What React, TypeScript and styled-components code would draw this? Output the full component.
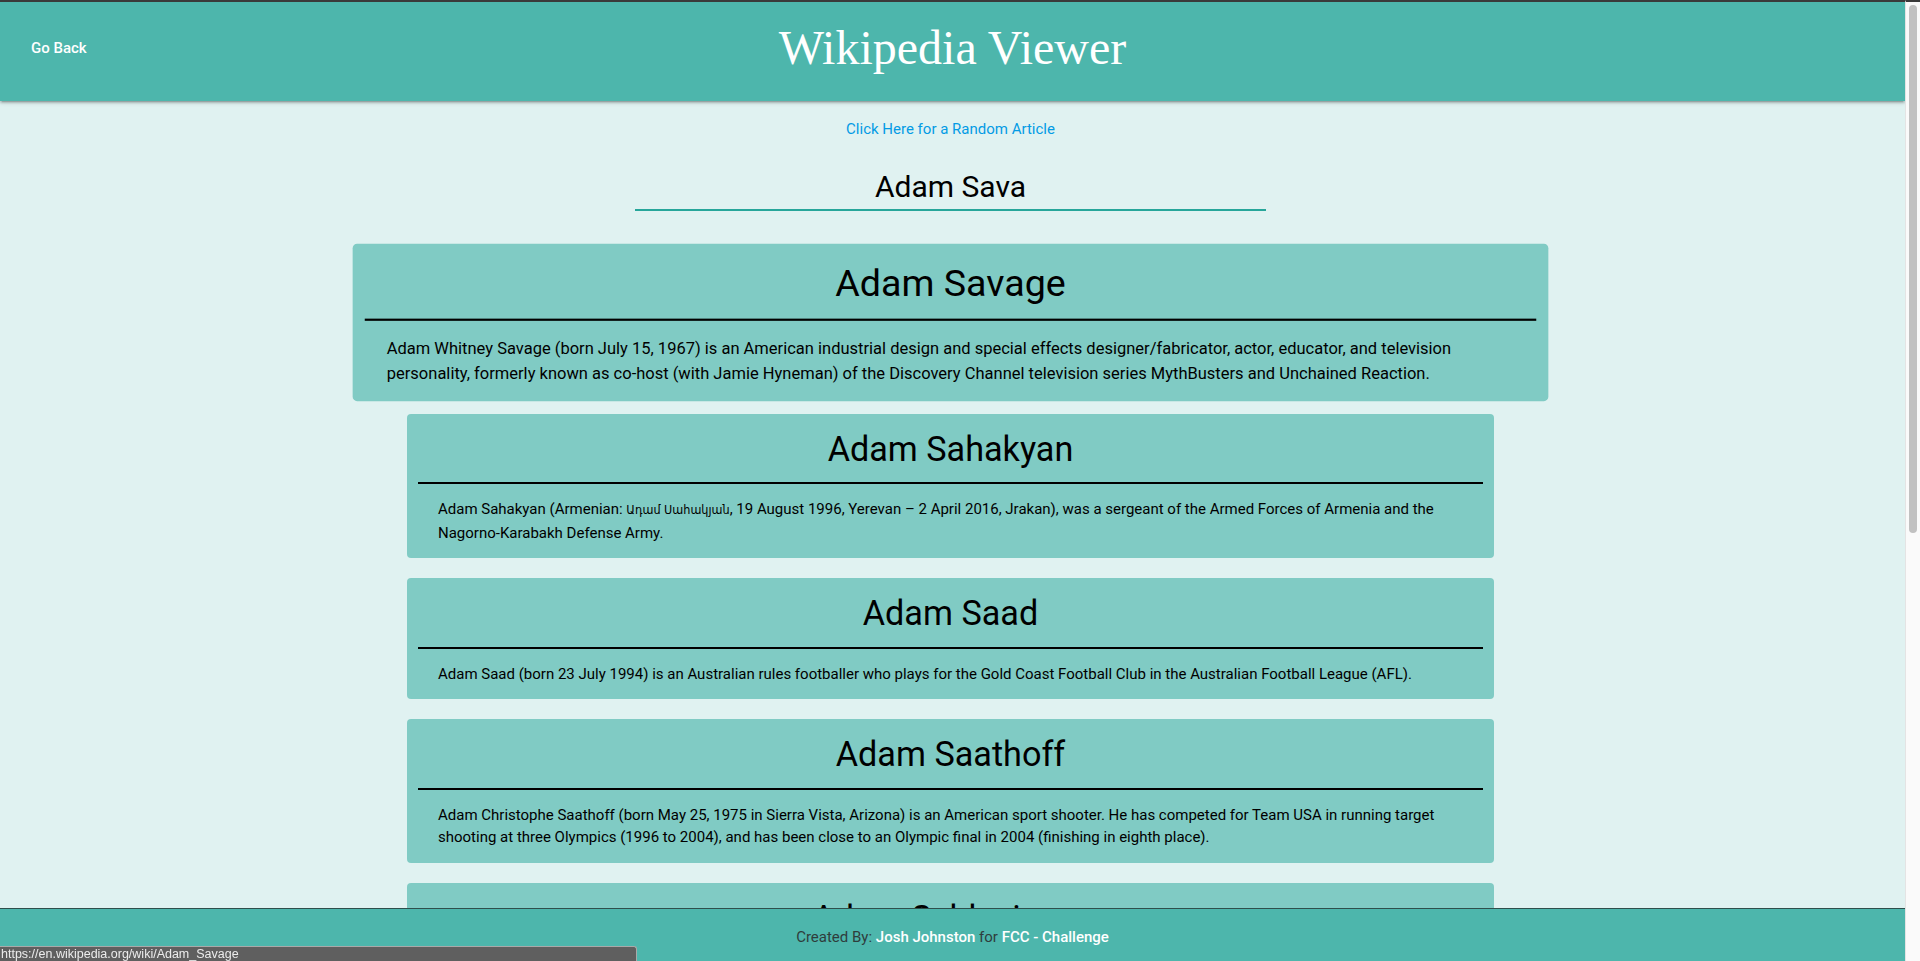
import { useState, type ReactNode } from 'react';
import styled, { createGlobalStyle } from 'styled-components';

const GlobalStyle = createGlobalStyle`
  body {
    margin: 0;
    background: #e0f2f1;
    font-family: Roboto, 'DejaVu Sans', sans-serif;
    color: #000;
  }
  * {
    box-sizing: border-box;
  }
`;

// Armenian glyphs come from a fallback font, kept a touch smaller so the line wraps like the original
const Armenian = styled.span`
  font-family: 'DejaVu Sans Condensed', 'DejaVu Sans', sans-serif;
  font-size: 12.5px;
`;

type Article = {
  title: string;
  extract: ReactNode;
  url: string;
};

const articles: Article[] = [
  {
    title: 'Adam Savage',
    extract:
      'Adam Whitney Savage (born July 15, 1967) is an American industrial design and special effects designer/fabricator, actor, educator, and television personality, formerly known as co-host (with Jamie Hyneman) of the Discovery Channel television series MythBusters and Unchained Reaction.',
    url: 'https://en.wikipedia.org/wiki/Adam_Savage',
  },
  {
    title: 'Adam Sahakyan',
    extract: (
      <>
        Adam Sahakyan (Armenian: <Armenian lang="hy">Ադամ Սահակյան</Armenian>, 19 August 1996, Yerevan – 2
        April 2016, Jrakan), was a sergeant of the Armed Forces of Armenia and the Nagorno-Karabakh Defense
        Army.
      </>
    ),
    url: 'https://en.wikipedia.org/wiki/Adam_Sahakyan',
  },
  {
    title: 'Adam Saad',
    extract:
      'Adam Saad (born 23 July 1994) is an Australian rules footballer who plays for the Gold Coast Football Club in the Australian Football League (AFL).',
    url: 'https://en.wikipedia.org/wiki/Adam_Saad',
  },
  {
    title: 'Adam Saathoff',
    extract:
      'Adam Christophe Saathoff (born May 25, 1975 in Sierra Vista, Arizona) is an American sport shooter. He has competed for Team USA in running target shooting at three Olympics (1996 to 2004), and has been close to an Olympic final in 2004 (finishing in eighth place).',
    url: 'https://en.wikipedia.org/wiki/Adam_Saathoff',
  },
  {
    title: 'Adam Schlesinger',
    extract:
      'Adam Lyons Schlesinger (October 31, 1967 – April 1, 2020) was an American musician, songwriter and record producer.',
    url: 'https://en.wikipedia.org/wiki/Adam_Schlesinger',
  },
  {
    title: 'Adam Sandler',
    extract:
      'Adam Richard Sandler (born September 9, 1966) is an American actor, comedian, screenwriter, film producer, and musician.',
    url: 'https://en.wikipedia.org/wiki/Adam_Sandler',
  },
  {
    title: 'Adam Schiff',
    extract: 'Adam Bennett Schiff (born June 22, 1960) is an American politician and lawyer.',
    url: 'https://en.wikipedia.org/wiki/Adam_Schiff',
  },
  {
    title: 'Adam Scott (actor)',
    extract: 'Adam Paul Scott (born April 3, 1973) is an American actor and comedian.',
    url: 'https://en.wikipedia.org/wiki/Adam_Scott_(actor)',
  },
  {
    title: 'Adam Scott (golfer)',
    extract: 'Adam Derek Scott (born 16 July 1980) is an Australian professional golfer.',
    url: 'https://en.wikipedia.org/wiki/Adam_Scott_(golfer)',
  },
  {
    title: 'Adam Schefter',
    extract: 'Adam Schefter (born December 7, 1966) is an American sports reporter for ESPN.',
    url: 'https://en.wikipedia.org/wiki/Adam_Schefter',
  },
];

export default function App() {
  const [query, setQuery] = useState('Adam Sava');
  const hovered = articles[0].url;

  return (
    <Page>
      <GlobalStyle />
      <HeaderBar>
        <BackLink href="#">Go Back</BackLink>
        <Title>Wikipedia Viewer</Title>
        <span />
      </HeaderBar>

      <Main>
        <RandomLink href="#">Click Here for a Random Article</RandomLink>
        <SearchInput value={query} onChange={(e) => setQuery(e.target.value)} />

        <ResultList>
          {articles.map((article) => (
            <ResultCard key={article.title} href={article.url} $lifted={article.url === hovered}>
              <CardTitle>{article.title}</CardTitle>
              <Rule />
              <Extract>{article.extract}</Extract>
            </ResultCard>
          ))}
        </ResultList>
      </Main>

      <FooterBar>
        <FooterText>
          Created By: <Highlight>Josh Johnston</Highlight> for <Highlight>FCC - Challenge</Highlight>
        </FooterText>
      </FooterBar>

      <StatusBubble>{hovered}</StatusBubble>

      <ScrollRail>
        <ScrollThumb />
      </ScrollRail>
    </Page>
  );
}

const Page = styled.div`
  padding-right: 15px;
`;

const HeaderBar = styled.header`
  display: grid;
  grid-template-columns: 1fr auto 1fr;
  align-items: center;
  height: 101px;
  padding: 0 31px 8px;
  background: #4db6ac;
  border-top: 2px solid #3a3a3a;
  box-shadow: 0 2px 2px 0 rgba(0, 0, 0, 0.14), 0 3px 1px -2px rgba(0, 0, 0, 0.12),
    0 1px 5px 0 rgba(0, 0, 0, 0.2);
  position: relative;
  z-index: 1;
`;

const BackLink = styled.a`
  justify-self: start;
  color: #fff;
  font-size: 15px;
  font-weight: 500;
  text-decoration: none;
`;

const Title = styled.h1`
  margin: 0;
  color: #fff;
  font-family: 'Liberation Serif', serif;
  font-size: 48px;
  font-weight: 400;
  line-height: 55px;
`;

const Main = styled.main`
  display: flex;
  flex-direction: column;
  align-items: center;
  padding: 17px 4px 80px 0;
`;

const RandomLink = styled.a`
  color: #039be5;
  font-size: 15px;
  line-height: 22.5px;
  text-decoration: none;
`;

const SearchInput = styled.input`
  width: 631px;
  height: 47px;
  margin: 23px 0 0;
  padding: 0;
  border: none;
  border-bottom: 2px solid #26a69a;
  background: transparent;
  outline: none;
  color: #000;
  font-family: Roboto, sans-serif;
  font-size: 30px;
  text-align: center;
`;

const ResultList = styled.div`
  display: flex;
  flex-direction: column;
  gap: 20px;
  width: 1087px;
  margin-top: 40px;
`;

const ResultCard = styled.a<{ $lifted?: boolean }>`
  display: block;
  padding: 0 11px;
  border-radius: 4px;
  background: #80cbc4;
  color: #000;
  text-decoration: none;
  transform: ${({ $lifted }) => ($lifted ? 'scale(1.1)' : 'none')};
`;

const CardTitle = styled.h4`
  margin: 17.1px 0 13.7px;
  font-size: 34.2px;
  font-weight: 400;
  line-height: 37.6px;
  text-align: center;
`;

const Rule = styled.hr`
  height: 2px;
  margin: 0;
  border: none;
  background: #000;
`;

const Extract = styled.p`
  margin: 14px 0;
  padding: 0 20px;
  font-size: 15px;
  line-height: 22.5px;
`;

const FooterBar = styled.footer`
  position: fixed;
  left: 0;
  right: 15px;
  bottom: 0;
  z-index: 2;
  display: flex;
  justify-content: center;
  align-items: center;
  height: 53px;
  padding-top: 4px;
  background: #4db6ac;
  border-top: 1px solid #2f4f4c;
`;

const FooterText = styled.p`
  margin: 0;
  color: #2f3d3c;
  font-size: 15px;
`;

const Highlight = styled.span`
  color: #fff;
  font-weight: 500;
`;

const StatusBubble = styled.div`
  position: fixed;
  left: 0;
  bottom: 0;
  z-index: 3;
  width: 637px;
  height: 15px;
  padding-left: 1px;
  background: #5f5f5f;
  border-top: 1px solid #a9a9a9;
  border-right: 1px solid #a9a9a9;
  border-top-right-radius: 3px;
  color: #ececec;
  font-family: 'Liberation Sans', sans-serif;
  font-size: 12.5px;
  line-height: 14px;
  white-space: nowrap;
`;

const ScrollRail = styled.div`
  position: fixed;
  top: 0;
  right: 0;
  bottom: 0;
  z-index: 4;
  width: 15px;
  padding: 3px 3px 0 3px;
  background: #fafafa;
  border-left: 1px solid #e4e4e4;
  border-top: 2px solid #3a3a3a;
`;

const ScrollThumb = styled.div`
  width: 8px;
  height: 528px;
  border-radius: 4px;
  background: #c1c1c1;
`;
